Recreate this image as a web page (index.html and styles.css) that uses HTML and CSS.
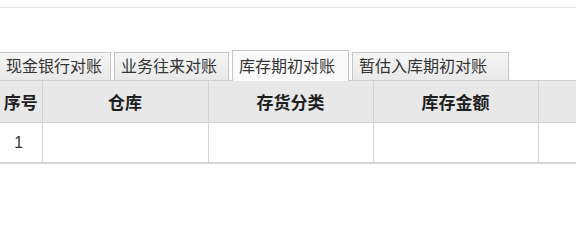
FILE: index.html
```html
<!DOCTYPE html>
<html lang="zh-CN">
<head>
<meta charset="utf-8">
<link rel="stylesheet" href="styles.css">
</head>
<body>
<div class="topbar"></div>
<div class="tabs">
  <div class="tab">现金银行对账</div>
  <div class="tab">业务往来对账</div>
  <div class="tab active">库存期初对账</div>
  <div class="tab">暂估入库期初对账</div>
</div>
<table class="grid">
  <colgroup>
    <col class="c0"><col class="c1"><col class="c2"><col class="c3"><col class="c4">
  </colgroup>
  <thead>
    <tr><th>序号</th><th>仓库</th><th>存货分类</th><th>库存金额</th><th></th></tr>
  </thead>
  <tbody>
    <tr><td class="num">1</td><td></td><td></td><td></td><td></td></tr>
  </tbody>
</table>
</body>
</html>
```
FILE: styles.css
```css
html, body {
  margin: 0;
  padding: 0;
  background: #fff;
  font-family: "Noto Sans CJK SC", "Noto Sans", sans-serif;
  width: 576px;
  overflow: hidden;
}
.topbar {
  height: 7px;
  border-bottom: 1px solid #e2e2e2;
}
.tabs {
  display: flex;
  align-items: flex-end;
  gap: 3px;
  margin-top: 41px;
  height: 31px;
  border-bottom: 1px solid #cfcfcf;
}
.tab {
  box-sizing: border-box;
  height: 28px;
  padding: 0 6px;
  border: 1px solid #c6c6c6;
  border-bottom: none;
  background: linear-gradient(#f6f6f6, #e9e9e9);
  color: #333;
  font-size: 16px;
  line-height: 25px;
  white-space: nowrap;
}
.tab:first-child {
  border-left: none;
  width: 111px;
}
.tab:nth-child(2) { width: 115px; }
.tab.active {
  height: 31px;
  width: 117px;
  background: #fafafa;
  line-height: 29px;
  margin-bottom: -1px;
}
.tab:nth-child(4) { width: 157px; }
.grid {
  border-collapse: collapse;
  table-layout: fixed;
  width: 600px;
  border-bottom: 2px solid #d6d6d6;
  font-family: "Liberation Sans", "Noto Sans CJK SC", sans-serif;
}
.c0 { width: 42px; }
.c1 { width: 166px; }
.c2 { width: 165px; }
.c3 { width: 165px; }
.c4 { width: 62px; }
.grid th {
  height: 41px;
  background: #e8e8e8;
  color: #1e1e1e;
  font-size: 17px;
  font-weight: bold;
  border-left: 1px solid #d2d2d2;
  border-bottom: 1px solid #d2d2d2;
  padding: 0;
  text-align: center;
}
.grid td {
  height: 39px;
  color: #333;
  font-size: 16px;
  border-left: 1px solid #d6d6d6;
  padding: 0;
  text-align: center;
}
.grid td.num { padding-right: 4px; }
.grid th:first-child, .grid td:first-child { border-left: none; }
```
